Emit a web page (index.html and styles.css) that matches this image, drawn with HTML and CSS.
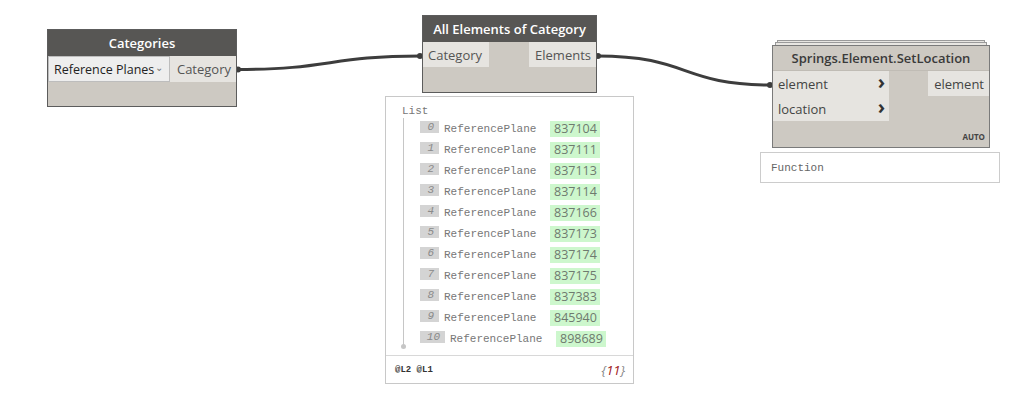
FILE: index.html
```html
<!DOCTYPE html>
<html>
<head>
<meta charset="utf-8">
<link rel="stylesheet" href="styles.css">
</head>
<body>
<div class="canvas">
  <svg class="wires" width="1014" height="396" viewBox="0 0 1014 396">
    <path d="M237 69.5 C 330 69.5, 330 56, 421 56" />
    <path d="M597 56 C 690 56, 680 85, 771 85" />
    <circle cx="238" cy="69.5" r="3" />
    <circle cx="420" cy="56" r="3" />
    <circle cx="598" cy="56" r="3" />
    <circle cx="770" cy="85" r="3" />
  </svg>

  <div class="node node-categories">
    <div class="node-head dark">Categories</div>
    <div class="node-row">
      <div class="dropdown"><span>Reference Planes</span><span class="caret">⌄</span></div>
      <div class="port out">Category</div>
    </div>
  </div>

  <div class="node node-allelems">
    <div class="node-head dark">All Elements of Category</div>
    <div class="node-row split">
      <div class="port in">Category</div>
      <div class="port out">Elements</div>
    </div>
  </div>

  <div class="watch">
    <div class="watch-body">
      <div class="list-title">List</div>
      <div class="list">
        <div class="item"><span class="idx">0</span><span class="type">ReferencePlane</span><span class="val">837104</span></div>
        <div class="item"><span class="idx">1</span><span class="type">ReferencePlane</span><span class="val">837111</span></div>
        <div class="item"><span class="idx">2</span><span class="type">ReferencePlane</span><span class="val">837113</span></div>
        <div class="item"><span class="idx">3</span><span class="type">ReferencePlane</span><span class="val">837114</span></div>
        <div class="item"><span class="idx">4</span><span class="type">ReferencePlane</span><span class="val">837166</span></div>
        <div class="item"><span class="idx">5</span><span class="type">ReferencePlane</span><span class="val">837173</span></div>
        <div class="item"><span class="idx">6</span><span class="type">ReferencePlane</span><span class="val">837174</span></div>
        <div class="item"><span class="idx">7</span><span class="type">ReferencePlane</span><span class="val">837175</span></div>
        <div class="item"><span class="idx">8</span><span class="type">ReferencePlane</span><span class="val">837383</span></div>
        <div class="item"><span class="idx">9</span><span class="type">ReferencePlane</span><span class="val">845940</span></div>
        <div class="item"><span class="idx wide">10</span><span class="type">ReferencePlane</span><span class="val">898689</span></div>
      </div>
    </div>
    <div class="watch-foot">
      <span class="levels">@L2 @L1</span>
      <span class="count">{<b>11</b>}</span>
    </div>
  </div>

  <div class="node node-springs">
    <div class="stack s2"></div>
    <div class="stack s1"></div>
    <div class="node-head light">Springs.Element.SetLocation</div>
    <div class="springs-body">
      <div class="inputs">
        <div class="port in arrow"><span>element</span><span class="chev">›</span></div>
        <div class="port in arrow"><span>location</span><span class="chev">›</span></div>
      </div>
      <div class="outputs">
        <div class="port out">element</div>
      </div>
    </div>
    <div class="auto">AUTO</div>
  </div>

  <div class="function">Function</div>
</div>
</body>
</html>
```

FILE: styles.css
```css
html, body {
  margin: 0;
  padding: 0;
  background: #ffffff;
}

.canvas {
  position: relative;
  width: 1014px;
  height: 396px;
  overflow: hidden;
  font-family: "Open Sans", "Liberation Sans", sans-serif;
}

.wires {
  position: absolute;
  left: 0;
  top: 0;
}

.wires path {
  fill: none;
  stroke: #3d3d3d;
  stroke-width: 3;
}

.wires circle {
  fill: #3d3d3d;
}

.node {
  position: absolute;
  box-sizing: border-box;
  background: #cdc9c2;
  border: 1px solid #5c5c5c;
}

.node-head {
  height: 26px;
  display: flex;
  align-items: center;
  justify-content: center;
  font-size: 13px;
  font-weight: 600;
}

.node-head.dark {
  background: #575654;
  color: #ffffff;
}

.node-head.light {
  height: 24px;
  background: #cdc9c2;
  color: #3a3a3a;
  border-bottom: 1px solid #c0bcb5;
}

.node-row {
  display: flex;
  height: 26px;
}

.node-row.split {
  justify-content: space-between;
  height: 25px;
}

.port {
  background: #e6e4e0;
  color: #555555;
  font-size: 13px;
  display: flex;
  align-items: center;
  box-sizing: border-box;
}

.port.in {
  padding-left: 5px;
}

.port.out {
  padding: 0 5px;
  justify-content: flex-end;
}

.node-categories {
  left: 47px;
  top: 29px;
  width: 190px;
  height: 78px;
}

.dropdown {
  width: 122px;
  box-sizing: border-box;
  background: #eeeeee;
  border: 1px solid #bdbdbd;
  display: flex;
  align-items: center;
  justify-content: space-between;
  padding: 0 6px 0 5px;
  font-size: 12.5px;
  color: #222222;
}

.caret {
  font-size: 10px;
  color: #777777;
  margin-top: -5px;
}

.node-categories .port.out {
  flex: 1;
}

.node-allelems {
  left: 422px;
  top: 15px;
  width: 175px;
  height: 78px;
}

.node-allelems .port.in {
  width: 66px;
}

.node-allelems .port.out {
  width: 67px;
}

.watch {
  position: absolute;
  left: 385px;
  top: 96px;
  width: 249px;
  height: 288px;
  box-sizing: border-box;
  border: 1px solid #c8c8c8;
  background: #ffffff;
  display: flex;
  flex-direction: column;
}

.watch-body {
  flex: 1;
  padding: 7px 0 0 16px;
  font-family: "Liberation Mono", "DejaVu Sans Mono", monospace;
  font-size: 11px;
  color: #777777;
}

.list-title {
  line-height: 14px;
}

.list {
  position: relative;
  margin-left: 1px;
  padding: 0 0 0 16px;
  border-left: 1px solid #c6c6c6;
  height: 227px;
  box-sizing: border-box;
}

.list::after {
  content: "";
  position: absolute;
  left: -3px;
  bottom: -4px;
  width: 5px;
  height: 5px;
  border-radius: 50%;
  background: #c6c6c6;
}

.item {
  display: flex;
  align-items: center;
  height: 21px;
}

.idx {
  width: 19px;
  height: 12px;
  background: #d4d4d4;
  color: #8a8a8a;
  font-style: italic;
  font-size: 11px;
  line-height: 13px;
  text-align: right;
  padding-right: 5px;
  box-sizing: border-box;
  margin-top: -4px;
}

.idx.wide {
  width: 25px;
}

.type {
  margin-left: 5px;
  width: 106px;
}

.val {
  background: #cdf7cd;
  color: #6f7a6f;
  font-family: "Open Sans", "Liberation Sans", sans-serif;
  font-size: 12.5px;
  height: 16px;
  line-height: 16px;
  padding: 0 3px 0 4px;
}

.watch-foot {
  height: 27px;
  border-top: 1px solid #d8d8d8;
  display: flex;
  align-items: center;
  justify-content: space-between;
  padding: 0 8px 0 9px;
}

.levels {
  font-family: "Liberation Mono", "DejaVu Sans Mono", monospace;
  font-weight: bold;
  font-size: 9px;
  color: #333333;
}

.count {
  font-style: italic;
  font-size: 13px;
  color: #888888;
}

.count b {
  font-weight: normal;
  color: #a01818;
}

.node-springs {
  left: 772px;
  top: 45px;
  width: 218px;
  height: 103px;
  border-color: #7a7a7a;
}

.stack {
  position: absolute;
  border: 1px solid #9a9a9a;
  border-bottom: none;
  background: #e8e6e2;
  box-sizing: border-box;
}

.s1 {
  top: -4px;
  height: 3px;
  left: 2px;
  right: 2px;
}

.s2 {
  top: -6px;
  height: 2px;
  left: 4px;
  right: 4px;
}

.springs-body {
  display: flex;
  justify-content: space-between;
}

.inputs {
  display: flex;
  flex-direction: column;
}

.inputs .port {
  width: 116px;
  height: 25px;
  justify-content: space-between;
  padding-right: 4px;
  color: #444444;
}

.chev {
  font-weight: bold;
  font-size: 20px;
  line-height: 20px;
  color: #333333;
  margin-top: -4px;
}

.outputs .port {
  width: 61px;
  height: 25px;
  color: #444444;
}

.auto {
  text-align: right;
  font-size: 8px;
  font-weight: bold;
  color: #444444;
  padding: 10px 4px 0 0;
}

.function {
  position: absolute;
  left: 760px;
  top: 152px;
  width: 240px;
  height: 31px;
  box-sizing: border-box;
  border: 1px solid #cccccc;
  background: #ffffff;
  font-family: "Liberation Mono", "DejaVu Sans Mono", monospace;
  font-size: 11px;
  color: #666666;
  display: flex;
  align-items: center;
  padding-left: 10px;
}
```
